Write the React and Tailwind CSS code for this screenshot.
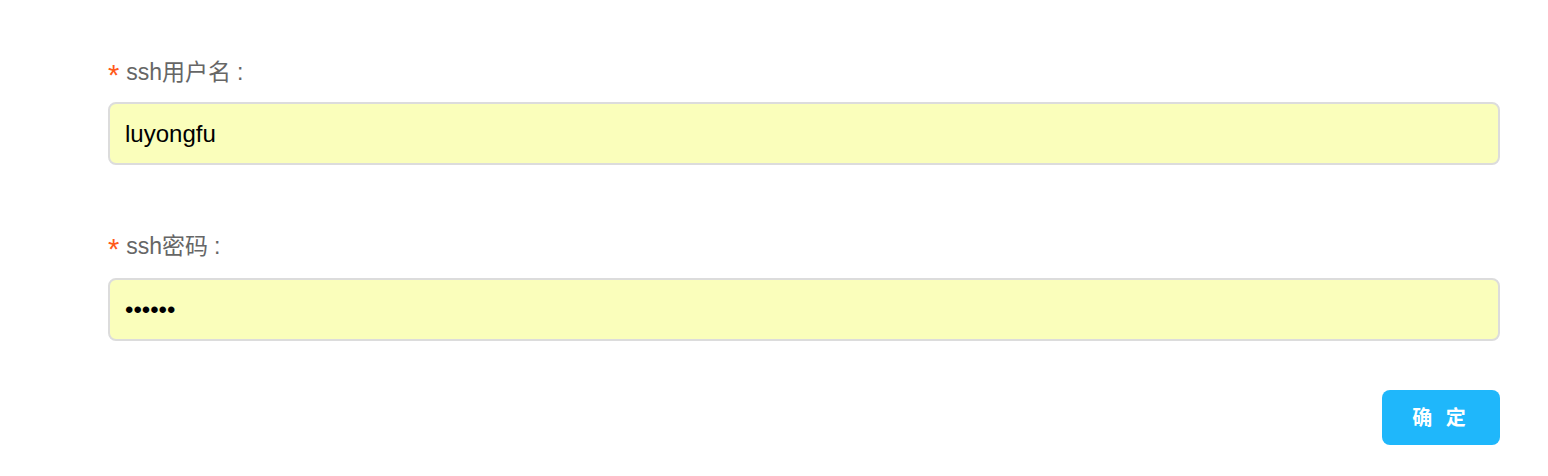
export default function App() {
  const font = { fontFamily: '"Liberation Sans", "Noto Sans CJK SC", sans-serif' };
  return (
    <div className="w-[1548px] h-[476px] bg-white pl-[108px] pr-[48px] pt-[59px]" style={font}>
      <div className="flex flex-col">
        <label className="flex items-center h-[26px] text-[23px] text-[#666666] leading-[26px]">
          <span className="text-[#ff5a1a] mr-[7px] text-[29px] leading-[26px] pt-[6px]">*</span>
          <span>ssh用户名<span className="ml-[6px]">:</span></span>
        </label>
        <input
          readOnly
          value="luyongfu"
          className="mt-[17px] h-[63px] w-full rounded-[8px] border-2 border-[#dcdcdc] bg-[#fafebb] px-[15px] text-[24px] text-black outline-none"
          style={font}
        />
        <label className="mt-[68px] flex items-center h-[26px] text-[23px] text-[#666666] leading-[26px]">
          <span className="text-[#ff5a1a] mr-[7px] text-[29px] leading-[26px] pt-[6px]">*</span>
          <span>ssh密码<span className="ml-[6px]">:</span></span>
        </label>
        <input
          readOnly
          type="password"
          value="123456"
          className="mt-[19px] h-[63px] w-full rounded-[8px] border-2 border-[#dcdcdc] bg-[#fafebb] px-[15px] text-[24px] text-black outline-none"
          style={font}
        />
        <div className="mt-[49px] flex justify-end">
          <button className="h-[55px] w-[118px] rounded-[8px] bg-[#1fb7fb] text-[20px] font-bold text-white tracking-[4px]" style={font}>
            确 定
          </button>
        </div>
      </div>
    </div>
  );
}
